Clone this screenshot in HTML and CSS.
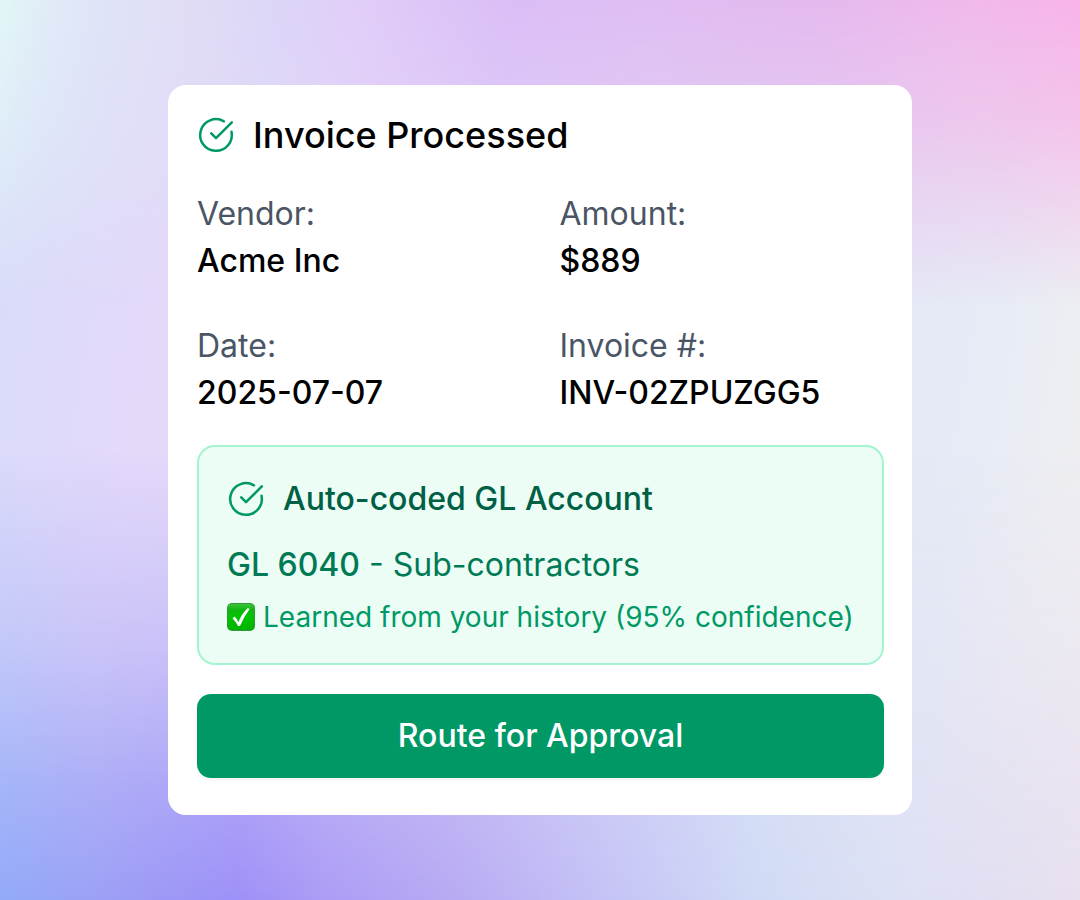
FILE: index.html
```html
<!DOCTYPE html>
<html lang="en">
<head>
<meta charset="utf-8">
<meta name="viewport" content="width=device-width, initial-scale=1">
<title>Invoice Processed</title>
<link rel="stylesheet" href="styles.css">
</head>
<body>
<main class="card">
  <header class="card-header">
    <svg class="icon" viewBox="0 0 24 24" aria-hidden="true"><path d="M21.8 10A10 10 0 1 1 17 3.34"/><path d="m9 11 3 3L22 4"/></svg>
    <h1 class="card-title">Invoice Processed</h1>
  </header>
  <dl class="details">
    <div><dt>Vendor:</dt><dd>Acme Inc</dd></div>
    <div><dt>Amount:</dt><dd>$889</dd></div>
    <div><dt>Date:</dt><dd>2025-07-07</dd></div>
    <div><dt>Invoice #:</dt><dd>INV-02ZPUZGG5</dd></div>
  </dl>
  <section class="coding">
    <div class="coding-header">
      <svg class="icon" viewBox="0 0 24 24" aria-hidden="true"><path d="M21.8 10A10 10 0 1 1 17 3.34"/><path d="m9 11 3 3L22 4"/></svg>
      <h2 class="coding-title">Auto-coded GL Account</h2>
    </div>
    <p class="account"><strong>GL 6040</strong> - Sub-contractors</p>
    <p class="confidence">
      <svg class="tick" viewBox="0 0 28 28" aria-hidden="true">
        <defs>
          <linearGradient id="tick-fill" x1="0" y1="0" x2="0" y2="1"><stop offset="0" stop-color="#3fc43f"/><stop offset=".22" stop-color="#12b512"/><stop offset=".5" stop-color="#00c400"/><stop offset="1" stop-color="#00b200"/></linearGradient>
        </defs>
        <rect class="tick-edge" width="28" height="28" rx="5"/>
        <rect fill="url(#tick-fill)" x="1" y="1" width="26" height="26" rx="4"/>
        <path class="tick-mark" d="M5.500 15.200 7.600 13.600Q9.600 15.600 11.400 19Q14.600 11 20.800 5L22.600 6Q17 13.500 13 23H11Q8.600 18.300 5.500 15.200z"/>
      </svg>
      <span>Learned from your history (95% confidence)</span>
    </p>
  </section>
  <button class="route" type="button">Route for Approval</button>
</main>
</body>
</html>
```
FILE: styles.css
```css
* { box-sizing: border-box; }
body {
  margin: 0;
  min-height: 100vh;
  display: flex;
  align-items: center;
  justify-content: center;
  position: relative;
  isolation: isolate;
  padding: 24px;
  font-family: Inter, "Liberation Sans", sans-serif;
  color: #000;
  background: linear-gradient(100deg, #d6dcfa 0%, #e5d9fa 17%, #e4e0f8 50%, #e6ebf6 84%, #edeef2 92%, #f0eff3 100%);
}
/* Top and bottom colour bands fade into the middle one */
body::before, body::after {
  content: "";
  position: absolute;
  inset: 0;
  z-index: -1;
}
body::before {
  background: linear-gradient(to right, #e2f6f6 0%, #e0ecf7 4%, #dfe3f7 10%, #e0dcf5 18%, #dcd6f7 25%, #e0cdf8 33%, #dabdf6 47%, #dfbdf2 60%, #e3b9ee 75%, #f0b9ea 90%, #f8b3e8 100%);
  mask-image: linear-gradient(to bottom, #000 0%, #000000b0 14%, #0000 34%);
}
body::after {
  background: linear-gradient(to right, #92aaf8 0%, #9ca0f5 9%, #9d90f7 22%, #ac9cf5 30%, #b8aaf3 42%, #c6c6f6 58%, #d0daf5 70%, #dce0f4 82%, #e2dff2 92%, #e8e0ef 100%);
  mask-image: linear-gradient(to top, #000 0%, #000000c8 12%, #00000060 28%, #0000 50%);
}
h1, h2, p, dl, dd { margin: 0; }
.card {
  width: 100%;
  max-width: 744px;
  padding: 28px 28px 37px 29px;
  border-radius: 18px;
  background: #fff;
}
.card-header, .coding-header { display: flex; align-items: center; gap: 18px; }
.icon {
  width: 38px;
  height: 38px;
  flex: none;
  fill: none;
  stroke: #009966;
  stroke-width: 1.6;
  stroke-linecap: round;
  stroke-linejoin: round;
}
.card-title { font-size: 36px; line-height: 44px; font-weight: 500; }
.details {
  display: grid;
  grid-template-columns: 1fr 1fr;
  column-gap: 38px;
  row-gap: 38px;
  margin-top: 34px;
  font-size: 32px;
}
dt { line-height: 46px; color: #4a5565; }
dd { line-height: 48px; font-weight: 500; }
.coding {
  margin-top: 28px;
  padding: 28px 24px 26px 28px;
  border: 2px solid #a4f4cf;
  border-radius: 18px;
  background: #ecfdf5;
}
.coding-title { font-size: 32px; line-height: 48px; font-weight: 500; color: #006045; }
.account { margin-top: 18px; font-size: 32px; line-height: 48px; color: #007a55; }
.account strong { font-weight: 500; }
.confidence { display: flex; align-items: center; gap: 8px; margin-top: 8px; font-size: 28px; line-height: 40px; color: #009966; }
.tick { width: 28px; height: 28px; flex: none; }
.tick-edge { fill: #2f9a35; }
.tick-mark { fill: #fff; }
.route {
  display: block;
  width: 100%;
  margin-top: 29px;
  padding: 18px;
  border: 0;
  border-radius: 14px;
  background: #009966;
  box-shadow: 0 2px 4px #0000000d;
  color: #fff;
  font: 500 32px/48px Inter, "Liberation Sans", sans-serif;
}
```
